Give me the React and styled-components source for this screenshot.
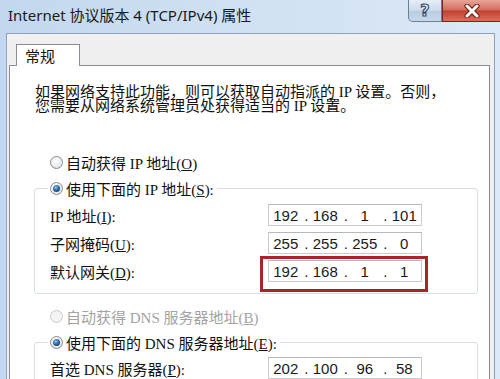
import React from 'react'
import styled, { createGlobalStyle } from 'styled-components'

const GlobalStyle = createGlobalStyle`
    html, body { margin: 0; padding: 0; background: #fff; }
    body { font-family: "Liberation Serif", "Noto Sans CJK SC", serif; color: #111; }
`

const Window = styled.div`
    width: 500px;
    height: 379px;
    overflow: hidden;
    display: flex;
    flex-direction: column;
    background: linear-gradient(90deg, #c2d8ee 0%, #d2e2f3 55%, #dce9f6 100%);
`
const TitleBar = styled.header`
    height: 33px;
    flex: none;
    display: flex;
    justify-content: space-between;
    align-items: flex-start;
`
const Title = styled.h1`
    margin: 0;
    padding: 4px 0 0 8px;
    font: 400 15px "Noto Sans", "Noto Sans CJK SC", sans-serif;
    color: #1a1a1a;
    white-space: nowrap;
`
const Controls = styled.div`
    display: flex;
`
const HelpButton = styled.div`
    width: 32px;
    height: 21px;
    display: flex;
    justify-content: center;
    align-items: center;
    border: 1px solid #6b7f98;
    border-top: none;
    border-radius: 0 0 0 5px;
    background: linear-gradient(#e6eef8, #cbdaeb 50%, #b7cbe1 51%, #c9d9ea);
    font: 700 16px "DejaVu Sans", sans-serif;
    color: #f4f8fc;
    -webkit-text-stroke: 1.2px #3b526e;
`
const CloseButton = styled.div`
    width: 57px;
    height: 21px;
    display: flex;
    justify-content: center;
    align-items: center;
    border: 1px solid #7b2219;
    border-top: none;
    border-right: none;
    background: linear-gradient(#e8a497, #d36b5c 48%, #c2402f 52%, #d8705f);
`
const Body = styled.main`
    flex: 1;
    min-height: 0;
    margin: 0 5px 0 6px;
    padding: 10px 4px 0 2px;
    background: #f0f0f0;
    border: 1px solid #8ea3bb;
    border-bottom: none;
    display: flex;
    flex-direction: column;
`
const TabStrip = styled.div`
    display: flex;
    padding-left: 7px;
`
const Tab = styled.div`
    position: relative;
    z-index: 1;
    width: 64px;
    height: 22px;
    box-sizing: border-box;
    margin-bottom: -1px;
    padding: 0 0 0 8px;
    background: #fff;
    border: 1px solid #898c95;
    border-bottom: none;
    font: 400 15px "Noto Sans CJK SC", sans-serif;
    line-height: 21px;
`
const Panel = styled.section`
    flex: 1;
    background: #fff;
    border: 1px solid #898c95;
    border-bottom: none;
    padding: 0 11px 0 24px;
`
const Intro = styled.p`
    margin: 19px 0 0 1px;
    font-size: 15px;
    line-height: 14px;
    white-space: nowrap;
`
const RadioRow = styled.label`
    display: flex;
    align-items: center;
    gap: 3px;
    height: 20px;
    margin: ${p => p.$top || 0}px 0 0 ${p => p.$indent || 0}px;
    font-size: 15px;
    white-space: nowrap;
    color: ${p => p.$disabled ? '#a3a3a3' : '#111'};
`
const RadioDot = styled.span`
    width: 13px;
    height: 13px;
    box-sizing: border-box;
    border-radius: 50%;
    flex: none;
    display: flex;
    justify-content: center;
    align-items: center;
    border: 1px solid ${p => p.$disabled ? '#c9c9c9' : '#8a8a8a'};
    background: ${p => p.$disabled
        ? '#f3f3f3'
        : 'radial-gradient(circle at 40% 35%, #ffffff, #d9dde2)'};
    &::after {
        content: '';
        display: ${p => p.$checked ? 'block' : 'none'};
        width: 7px;
        height: 7px;
        border-radius: 50%;
        background: radial-gradient(circle at 40% 35%, #8fc3ee, #1d5a98 55%, #0b2f5c);
    }
`
const Group = styled.fieldset`
    margin: 6px 0 0 0;
    padding: ${p => p.$padTop}px 0 11px 15px;
    border: 1px solid #d5dfe5;
    border-radius: 3px;
    min-width: 0;
`
const Legend = styled.legend`
    margin-left: -2px;
    padding: 0 3px 0 2px;
`
const FieldRows = styled.div`
    display: flex;
    flex-direction: column;
    gap: 6px;
`
const FieldRow = styled.div`
    display: grid;
    grid-template-columns: 218px 154px;
    align-items: center;
    height: 22px;
    font-size: 15px;
    white-space: nowrap;
`
const IpBox = styled.div`
    width: 154px;
    height: 22px;
    box-sizing: border-box;
    display: grid;
    grid-template-columns: 1fr 6px 1fr 6px 1fr 6px 1fr;
    align-items: center;
    background: #fff;
    border: 1px solid #c9cbcf;
    border-top-color: #b5b8bd;
    font: 400 15px "Liberation Sans", Arial, sans-serif;
    color: #1a1a1a;
`
const Octet = styled.span`
    text-align: center;
`
const Dot = styled.span`
    text-align: right;
`
const Highlight = styled.div`
    position: relative;
    width: 154px;
    &::after {
        content: '';
        position: absolute;
        top: -4px;
        left: -8px;
        right: -6px;
        bottom: -10px;
        border: 3px solid #a4262b;
        pointer-events: none;
    }
`

const Radio = ({ checked, disabled, children, ...rest }) => (
    <RadioRow $disabled={disabled} {...rest}>
        <RadioDot $checked={checked} $disabled={disabled} />
        <span>{children}</span>
    </RadioRow>
)

const IpField = ({ value }) => {
    const parts = value.split('.')
    return (
        <IpBox>
            {parts.map((p, i) => (
                <React.Fragment key={i}>
                    {i > 0 && <Dot>.</Dot>}
                    <Octet>{p}</Octet>
                </React.Fragment>
            ))}
        </IpBox>
    )
}

const CloseIcon = () => (
    <svg width='18' height='14' viewBox='0 0 18 14'>
        <path d='M4 2 L14 12 M14 2 L4 12' stroke='#6b1a12' strokeWidth='5' strokeLinecap='round' />
        <path d='M4 2 L14 12 M14 2 L4 12' stroke='#ffffff' strokeWidth='3' strokeLinecap='round' />
    </svg>
)

export default function App() {
    return (
        <Window>
            <GlobalStyle />
            <TitleBar>
                <Title>Internet 协议版本 4 (TCP/IPv4) 属性</Title>
                <Controls>
                    <HelpButton>?</HelpButton>
                    <CloseButton><CloseIcon /></CloseButton>
                </Controls>
            </TitleBar>
            <Body>
                <TabStrip>
                    <Tab>常规</Tab>
                </TabStrip>
                <Panel>
                    <Intro>
                        如果网络支持此功能，则可以获取自动指派的 IP 设置。否则，<br />
                        您需要从网络系统管理员处获得适当的 IP 设置。
                    </Intro>

                    <Radio $top={39} $indent={16}>自动获得 IP 地址(<u>O</u>)</Radio>
                    <Group $padTop={6}>
                        <Legend>
                            <Radio checked>使用下面的 IP 地址(<u>S</u>):</Radio>
                        </Legend>
                        <FieldRows>
                            <FieldRow>
                                <span>IP 地址(<u>I</u>):</span>
                                <IpField value='192.168.1.101' />
                            </FieldRow>
                            <FieldRow>
                                <span>子网掩码(<u>U</u>):</span>
                                <IpField value='255.255.255.0' />
                            </FieldRow>
                            <FieldRow>
                                <span>默认网关(<u>D</u>):</span>
                                <Highlight>
                                    <IpField value='192.168.1.1' />
                                </Highlight>
                            </FieldRow>
                        </FieldRows>
                    </Group>

                    <Radio disabled $top={12} $indent={16}>自动获得 DNS 服务器地址(<u>B</u>)</Radio>
                    <Group $padTop={5}>
                        <Legend>
                            <Radio checked>使用下面的 DNS 服务器地址(<u>E</u>):</Radio>
                        </Legend>
                        <FieldRows>
                            <FieldRow>
                                <span>首选 DNS 服务器(<u>P</u>):</span>
                                <IpField value='202.100.96.58' />
                            </FieldRow>
                        </FieldRows>
                    </Group>
                </Panel>
            </Body>
        </Window>
    )
}
